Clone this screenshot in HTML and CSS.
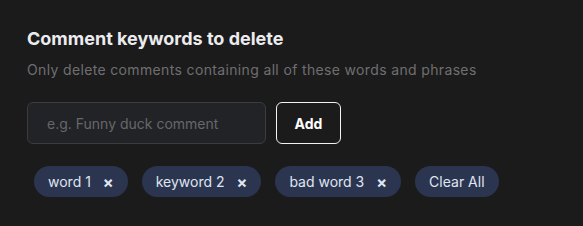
FILE: index.html
```html
<!DOCTYPE html>
<html lang="en">
<head>
    <meta charset="UTF-8">
    <meta name="viewport" content="width=device-width, initial-scale=1.0">
    <title>Comment keywords</title>
    <link rel="stylesheet" href="styles.css">
</head>
<body>
    <section class="keywords">
        <h2>Comment keywords to delete</h2>
        <p class="hint">Only delete comments containing all of these words and phrases</p>
        <div class="add-row">
            <input type="text" class="keyword-input" placeholder="e.g. Funny duck comment">
            <button class="add-button">Add</button>
        </div>
        <div class="chips">
            <span class="chip">word 1 <button class="chip-remove">&times;</button></span>
            <span class="chip">keyword 2 <button class="chip-remove">&times;</button></span>
            <span class="chip">bad word 3 <button class="chip-remove">&times;</button></span>
            <button class="chip clear-all">Clear All</button>
        </div>
    </section>
</body>
</html>
```
FILE: styles.css
```css
body {
    margin: 0;
    font-family: 'Inter', 'Liberation Sans', sans-serif;
    background-color: #1b1b1b;
    color: #e8e8ea;
}

.keywords {
    padding: 28px 27px;
}

.keywords h2 {
    margin: 0;
    font-size: 18px;
    font-weight: 700;
    line-height: 22px;
    color: #ececef;
}

.hint {
    margin: 10px 0 0;
    font-size: 14px;
    letter-spacing: 0.35px;
    line-height: 20px;
    color: #6f6f72;
}

.add-row {
    display: flex;
    gap: 10px;
    margin-top: 22px;
}

.keyword-input {
    width: 239px;
    height: 42px;
    box-sizing: border-box;
    padding: 0 19px;
    background-color: #222326;
    border: 1px solid #3b3c40;
    border-radius: 6px;
    color: #e8e8ea;
    font-family: inherit;
    font-size: 14px;
    outline: none;
}

.keyword-input::placeholder {
    color: #66676b;
}

.add-button {
    width: 65px;
    height: 42px;
    background-color: #1b1b1b;
    border: 1px solid #f2f2f2;
    border-radius: 6px;
    color: #ffffff;
    font-family: inherit;
    font-size: 14px;
    font-weight: 700;
    cursor: pointer;
}

.chips {
    display: flex;
    gap: 14px;
    margin-top: 22px;
    padding-left: 7px;
}

.chip {
    display: inline-flex;
    align-items: center;
    height: 31px;
    box-sizing: border-box;
    padding: 0 14px;
    background-color: #2c3550;
    border: none;
    border-radius: 16px;
    color: #dfe5f0;
    font-family: inherit;
    font-size: 14px;
}

.chip-remove {
    margin-left: 12px;
    padding: 0;
    background: none;
    border: none;
    color: #dfe5f0;
    font-family: inherit;
    font-size: 16px;
    font-weight: 700;
    line-height: 1;
    cursor: pointer;
}

.clear-all {
    cursor: pointer;
}
```
